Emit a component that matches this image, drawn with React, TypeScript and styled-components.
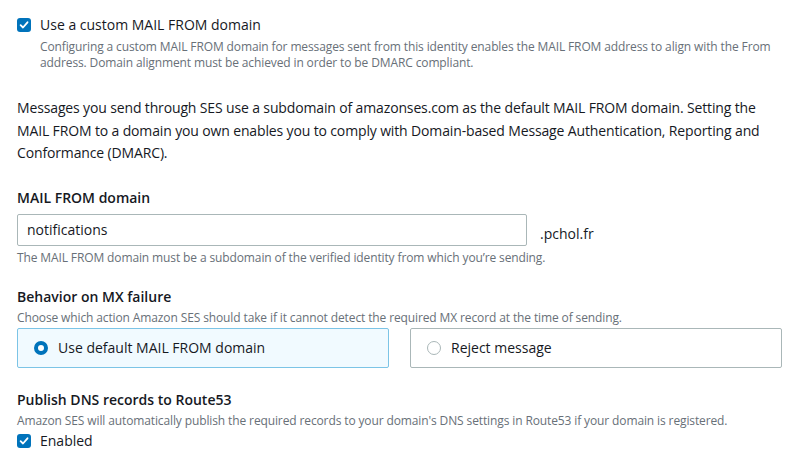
import { createGlobalStyle, styled } from 'styled-components';

const GlobalStyle = createGlobalStyle`
  html, body {
    margin: 0;
    padding: 0;
    background: #ffffff;
  }
  body {
    font-family: "Open Sans", "Liberation Sans", Arial, sans-serif;
    color: #16191f;
  }
`;

const Page = styled.div`
  width: 765px;
  padding: 15px 18px 0 17px;
  display: flex;
  flex-direction: column;
`;

const CheckRow = styled.label<{ $top?: number }>`
  display: flex;
  align-items: flex-start;
  gap: 9px;
  margin-top: ${(p) => p.$top ?? 0}px;
`;

const Box = styled.span`
  flex: none;
  width: 14px;
  height: 14px;
  margin-top: 3px;
  border-radius: 3px;
  background: #0073bb;
  display: flex;
  align-items: center;
  justify-content: center;
`;

const CheckText = styled.div`
  display: flex;
  flex-direction: column;
`;

const CheckTitle = styled.span`
  font-size: 14px;
  line-height: 20px;
`;

const Hint = styled.div<{ $top?: number }>`
  font-size: 12px;
  line-height: 16px;
  letter-spacing: -0.12px;
  color: #687078;
  margin-top: ${(p) => p.$top ?? 0}px;
`;

const Paragraph = styled.p`
  margin: 26px 0 0;
  font-size: 14px;
  line-height: 22.5px;
  letter-spacing: -0.14px;
`;

const Label = styled.div<{ $top: number }>`
  margin-top: ${(p) => p.$top}px;
  font-size: 14px;
  line-height: 22px;
  font-weight: 600;
`;

const InputRow = styled.div`
  display: flex;
  align-items: center;
  gap: 13px;
  margin-top: 5px;
`;

const TextInput = styled.div`
  width: 510px;
  height: 32px;
  box-sizing: border-box;
  border: 1px solid #aab7b8;
  border-radius: 2px;
  padding: 0 9px;
  display: flex;
  align-items: center;
  font-size: 14px;
`;

const Suffix = styled.span`
  font-size: 14px;
  margin-top: 8px;
`;

const Tiles = styled.div`
  display: grid;
  grid-template-columns: 1fr 1fr;
  gap: 21px;
  margin-top: 2px;
`;

const Tile = styled.div<{ $selected?: boolean }>`
  height: 40px;
  box-sizing: border-box;
  border: 1px solid ${(p) => (p.$selected ? '#7cc4e6' : '#aab7b8')};
  background: ${(p) => (p.$selected ? '#f1faff' : '#ffffff')};
  border-radius: 2px;
  display: flex;
  align-items: center;
  gap: 10px;
  padding: 0 16px;
  font-size: 14px;
`;

const Radio = styled.span<{ $on?: boolean }>`
  flex: none;
  width: 14px;
  height: 14px;
  box-sizing: border-box;
  border-radius: 50%;
  border: ${(p) => (p.$on ? '4px solid #0073bb' : '1.5px solid #aab7b8')};
  background: #ffffff;
`;

const Tick = () => (
  <svg width="10" height="10" viewBox="0 0 10 10">
    <path d="M1.6 5.2 L4 7.5 L8.5 2.3" fill="none" stroke="#ffffff" strokeWidth="1.8" strokeLinecap="round" strokeLinejoin="round" />
  </svg>
);

export default function App() {
  return (
    <>
      <GlobalStyle />
      <Page>
        <CheckRow>
          <Box><Tick /></Box>
          <CheckText>
            <CheckTitle>Use a custom MAIL FROM domain</CheckTitle>
            <Hint $top={4}>
              Configuring a custom MAIL FROM domain for messages sent from this identity enables the MAIL FROM address to align with the From
              address. Domain alignment must be achieved in order to be DMARC compliant.
            </Hint>
          </CheckText>
        </CheckRow>

        <Paragraph>
          Messages you send through SES use a subdomain of amazonses.com as the default MAIL FROM domain. Setting the MAIL FROM to a domain you own enables you to comply with Domain-based Message Authentication, Reporting and Conformance (DMARC).
        </Paragraph>

        <Label $top={22}>MAIL FROM domain</Label>
        <InputRow>
          <TextInput>notifications</TextInput>
          <Suffix>.pchol.fr</Suffix>
        </InputRow>
        <Hint $top={4}>The MAIL FROM domain must be a subdomain of the verified identity from which you’re sending.</Hint>

        <Label $top={20}>Behavior on MX failure</Label>
        <Hint $top={2}>Choose which action Amazon SES should take if it cannot detect the required MX record at the time of sending.</Hint>
        <Tiles>
          <Tile $selected>
            <Radio $on />
            Use default MAIL FROM domain
          </Tile>
          <Tile>
            <Radio />
            Reject message
          </Tile>
        </Tiles>

        <Label $top={21}>Publish DNS records to Route53</Label>
        <Hint $top={2}>Amazon SES will automatically publish the required records to your domain's DNS settings in Route53 if your domain is registered.</Hint>
        <CheckRow $top={2}>
          <Box><Tick /></Box>
          <CheckTitle>Enabled</CheckTitle>
        </CheckRow>
      </Page>
    </>
  );
}
